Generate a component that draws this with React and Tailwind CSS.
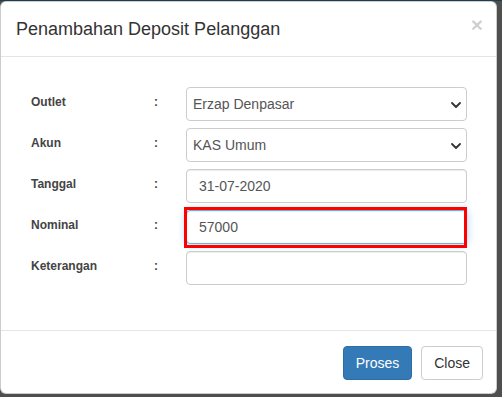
import { useState } from 'react';

const rows = [
    { label: 'Outlet', type: 'select', value: 'Erzap Denpasar' },
    { label: 'Akun', type: 'select', value: 'KAS Umum' },
    { label: 'Tanggal', type: 'text', value: '31-07-2020' },
    { label: 'Nominal', type: 'text', value: '57000', focus: true },
    { label: 'Keterangan', type: 'text', value: '' },
];

function Chevron() {
    return (
        <svg width="10" height="6" viewBox="0 0 10 6" className="absolute right-[5px] top-[14px]">
            <path d="M1 1l4 4 4-4" fill="none" stroke="#333" strokeWidth="1.8" strokeLinecap="round" strokeLinejoin="round" />
        </svg>
    );
}

function Field({ row }) {
    const [value, setValue] = useState(row.value);

    if (row.type === 'select') {
        return (
            <div className="relative flex-1 h-[34px] border border-[#ccc] rounded-[4px] bg-white flex items-center pl-[6px] text-[14px] text-[#555]">
                {value}
                <Chevron />
            </div>
        );
    }

    return (
        <div className="relative flex-1">
            <input
                value={value}
                onChange={e => setValue(e.target.value)}
                className={
                    row.focus
                        ? 'w-full h-[34px] rounded-[4px] bg-white px-[12px] text-[14px] text-[#555] outline-none border border-[#66afe9] shadow-[inset_0_1px_1px_rgba(0,0,0,0.075),0_0_8px_rgba(102,175,233,0.6)]'
                        : 'w-full h-[34px] rounded-[4px] bg-white px-[12px] text-[14px] text-[#555] outline-none border border-[#ccc] shadow-[inset_0_1px_1px_rgba(0,0,0,0.075)]'
                }
            />
            {row.focus && (
                <div className="absolute -left-[2px] -top-[3px] right-0 -bottom-[4px] border-[3px] border-[#ff0000] pointer-events-none" />
            )}
        </div>
    );
}

export default function App() {
    return (
        <div className="w-[502px] h-[397px] bg-[#4f4f4f] font-['Liberation_Sans',Arial,sans-serif] overflow-hidden">
            <div className="h-[1px] bg-[#1f3d4d]" />
            <div className="w-[497px] h-[393px] bg-white rounded-[6px] border border-black/20 flex flex-col">
                <div className="flex items-start justify-between h-[55px] px-[15px] pt-[14px] border-b border-[#e5e5e5]">
                    <h4 className="text-[18px] leading-[26px] text-[#333]">Penambahan Deposit Pelanggan</h4>
                    <button className="text-[21px] font-bold leading-[21px] text-black/20 mt-[-2px] mr-[-2px]">×</button>
                </div>

                <div className="flex flex-col gap-[7px] pt-[30px] pb-[45px] pl-[30px] pr-[29px]">
                    {rows.map(row => (
                        <div key={row.label} className="flex items-start">
                            <label className="w-[123px] pt-[7px] text-[12px] leading-[17px] font-bold text-[#444]">{row.label}</label>
                            <span className="w-[32px] pt-[7px] text-[12px] leading-[17px] font-bold text-[#444]">:</span>
                            <Field row={row} />
                        </div>
                    ))}
                </div>

                <div className="flex justify-end gap-[9px] border-t border-[#e5e5e5] pt-[15px] pr-[13px]">
                    <button className="h-[34px] px-[12px] rounded-[4px] bg-[#337ab7] border border-[#2e6da4] text-white text-[14px]">Proses</button>
                    <button className="h-[34px] px-[12px] rounded-[4px] bg-white border border-[#ccc] text-[#333] text-[14px]">Close</button>
                </div>
            </div>
        </div>
    );
}
